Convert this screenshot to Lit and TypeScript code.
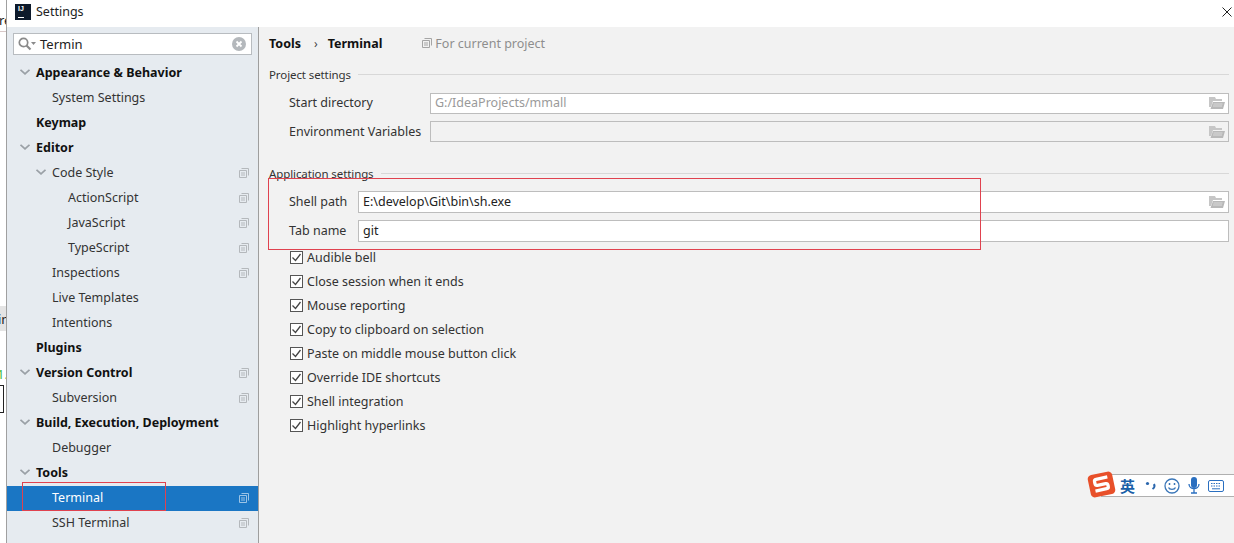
import { LitElement, html, css } from "lit";
import { customElement } from "lit/decorators.js";

type Row = { t: string; lvl: number; bold?: boolean; arrow?: boolean; copy?: boolean; sel?: boolean };
const ROWS: Row[] = [
  { t: "Appearance & Behavior", lvl: 0, bold: true, arrow: true },
  { t: "System Settings", lvl: 1 },
  { t: "Keymap", lvl: 0, bold: true },
  { t: "Editor", lvl: 0, bold: true, arrow: true },
  { t: "Code Style", lvl: 1, arrow: true, copy: true },
  { t: "ActionScript", lvl: 2, copy: true },
  { t: "JavaScript", lvl: 2, copy: true },
  { t: "TypeScript", lvl: 2, copy: true },
  { t: "Inspections", lvl: 1, copy: true },
  { t: "Live Templates", lvl: 1 },
  { t: "Intentions", lvl: 1 },
  { t: "Plugins", lvl: 0, bold: true },
  { t: "Version Control", lvl: 0, bold: true, arrow: true, copy: true },
  { t: "Subversion", lvl: 1, copy: true },
  { t: "Build, Execution, Deployment", lvl: 0, bold: true, arrow: true },
  { t: "Debugger", lvl: 1 },
  { t: "Tools", lvl: 0, bold: true, arrow: true },
  { t: "Terminal", lvl: 1, copy: true, sel: true },
  { t: "SSH Terminal", lvl: 1, copy: true },
];
const CHECKS = ["Audible bell", "Close session when it ends", "Mouse reporting", "Copy to clipboard on selection", "Paste on middle mouse button click", "Override IDE shortcuts", "Shell integration", "Highlight hyperlinks"];

const copyIcon = (c = "#b4b8bc") => html`<svg class="copy" width="10" height="10" viewBox="0 0 10 10" fill="none" stroke=${c}><path d="M2.5 .5h7v7M.5 2.5h7v7h-7z"/><path d="M2 5h4M2 7h4"/></svg>`;
const folder = html`<svg class="folder" width="16" height="13" viewBox="0 0 16 13"><path d="M0 1h6l1 2h6v2H4L2 11H0z" fill="#c6c6c6"/><path d="M4 6h12l-2 7H1.500z" fill="#b8b8b8"/><path d="M4.500 8h9M4 10h9" stroke="#dadada"/></svg>`;

@customElement("app-root")
export class AppRoot extends LitElement {
  static styles = css`
    :host { display: block; width: 1234px; height: 543px; overflow: hidden; position: relative; background: #fff;
      font-family: "Noto Sans", "Open Sans", sans-serif; font-size: 12.5px; color: #1f1f1f; }
    .dialog { position: absolute; left: 6px; top: 0; width: 1228px; height: 543px; display: flex; flex-direction: column;
      border-left: 1px solid #a0a0a0; box-sizing: border-box; background: #fff; }
    .title { height: 27px; box-sizing: border-box; padding: 0 0 4px 8px; flex: none; display: flex; align-items: center; gap: 5px; background: #fff; }
    .logo { width: 16px; height: 16px; background: #0d1a2b; position: relative; flex: none; color: #fff;
      font: bold 7px/9px "Liberation Sans", sans-serif; text-indent: 3px; }
    .logo::after { content: ""; position: absolute; left: 3px; bottom: 2px; width: 6px; height: 1px; background: #fff; }
    .title-text { color: #222; }
    .close { margin-left: auto; margin-right: 2px; display: block; }
    .body { flex: 1; display: flex; min-height: 0; }
    .side { width: 252px; box-sizing: border-box; flex: none; background: #e6ebf0; border-right: 1px solid #9e9e9e; display: flex; flex-direction: column; }
    .search { margin: 6px 6px 0 6px; height: 20px; box-sizing: content-box; flex: none; background: #fff; border: 1px solid #b8bcc0; display: flex; align-items: center; padding-left: 4px; }
    .search .q { flex: none; display: block; }
    .search span { margin-left: 4px; color: #222; font-size: 13px; }
    .search .x { margin-left: auto; margin-right: 5px; display: block; }
    .tree { margin-top: 6px; display: flex; flex-direction: column; }
    .row { height: 25px; box-sizing: border-box; padding-bottom: 2px; flex: none; display: flex; align-items: center; position: relative; color: #333; white-space: nowrap; }
    .row.b { font-weight: 700; color: #111; }
    .row.sel { background: #1a76c4; color: #fff; }
    .l0 { padding-left: 29px; } .l1 { padding-left: 45px; } .l2 { padding-left: 61px; }
    .arrow { position: absolute; top: 8px; display: block; }
    .a0 { left: 13px; } .a1 { left: 29px; }
    .row .copy { position: absolute; left: 232px; top: 7px; }
    .main { flex: 1; background: #f2f2f2; padding: 0 5px 0 10px; min-width: 0; }
    .crumb { height: 32px; display: flex; align-items: center; font-weight: 700; color: #111; }
    .sep { margin: 0 10px 0 13px; font-weight: 400; color: #444; font-size: 12px; }
    .proj { margin-left: 40px; font-weight: 400; color: #8e8e8e; display: flex; align-items: center; gap: 3px; }
    .legend { display: flex; align-items: center; gap: 7px; height: 18px; color: #333; font-size: 11.5px; letter-spacing: -.1px; }
    .legend i { flex: 1; height: 1px; background: #d8d8d8; }
    .field { display: flex; align-items: center; height: 22px; padding-left: 20px; color: #333; }
    .field.short, .field.short .input { height: 21px; }
    .field label { flex: none; }
    .field.lift label { padding-bottom: 2px; }
    .input { flex: 1; height: 22px; box-sizing: border-box; border: 1px solid #bdbdbd; background: #fff; display: flex; align-items: center; padding: 0 3px 0 4px; color: #222; white-space: nowrap; }
    .field.lift .input { padding-bottom: 2px; }
    .input.dis { color: #9a9a9a; }
    .input.empty { background: #f2f2f2; }
    .input .folder { margin-left: auto; display: block; }
    .w1 label { width: 141px; } .w2 label { width: 69px; }
    .checks { padding-left: 21px; margin-top: 3px; display: flex; flex-direction: column; }
    .chk { height: 24px; display: flex; align-items: center; gap: 4px; color: #333; }
    .chk svg { display: block; flex: none; }
    .redbox { position: absolute; border: 1px solid #e0424f; box-sizing: border-box; pointer-events: none; }
    .r1 { left: 22px; top: 482px; width: 144px; height: 29px; }
    .r2 { left: 268px; top: 178px; width: 713px; height: 72px; }
    .ime { position: absolute; left: 1087px; top: 470px; width: 147px; height: 30px; }
    .ime-bar { position: absolute; left: 14px; top: 4px; right: 0; height: 23px; border: 1px solid #b0b0b0; border-right: 0; box-sizing: border-box; background: #fff; }
    .ime-s { position: absolute; left: 0; top: 0; display: block; }
    .ime-t { position: absolute; left: 33px; top: 6px; color: #1a5fa8; font: 700 15px/20px "Noto Sans CJK SC", sans-serif; }
    .ime-i { position: absolute; display: block; }
    .i1 { left: 58px; top: 11px; } .i2 { left: 77px; top: 8px; } .i3 { left: 101px; top: 7px; } .i4 { left: 121px; top: 10px; }
    .bg-t { position: absolute; left: 0; font-size: 13px; white-space: nowrap; color: #222; }
    .t1 { top: 11px; left: -1px; } .t2 { top: 310px; left: -2px; } .t3 { top: 365px; left: -3px; color: #3cba3c; }
    .bg-line { position: absolute; left: 0; top: 31px; width: 6px; height: 1px; background: #d8c8c8; }
    .bg-grey { position: absolute; left: 0; top: 306px; height: 25px; width: 6px; background: #e4e4e4; }
    .bg-box { position: absolute; left: 0; top: 385px; width: 3px; height: 26px; border: 1px solid #222; border-left: 0; box-sizing: content-box; }
    .m6 { margin-top: 6px; } .m10 { margin-top: 10px; } .m7 { margin-top: 7px; } .m22 { margin-top: 22px; } .m9 { margin-top: 9px; }
  `;

  render() {
    return html`
      <div class="bg-line"></div>
      <div class="bg-grey"></div>
      <div class="bg-t t1">re</div>
      <div class="bg-t t2">in</div>
      <div class="bg-t t3">1.</div>
      <div class="bg-box"></div>
      <div class="dialog">
        <div class="title">
          <div class="logo">IJ</div>
          <span class="title-text">Settings</span>
          <svg class="close" width="10" height="10" viewBox="0 0 10 10" stroke="#222" fill="none"><path d="M.5.5l9 9M9.500.5l-9 9"/></svg>
        </div>
        <div class="body">
          <div class="side">
            <div class="search">
              <svg class="q" width="18" height="15" viewBox="0 0 18 15" fill="none"><circle cx="5.500" cy="5.500" r="4.200" stroke="#8a8a8a" stroke-width="1.700"/><path d="M8.500 8.500l4 4" stroke="#8a8a8a" stroke-width="2.200"/><path d="M13 5h5l-2.500 3z" fill="#8a8a8a"/></svg>
              <span>Termin</span>
              <svg class="x" width="14" height="14" viewBox="0 0 14 14"><circle cx="7" cy="7" r="7" fill="#b4b8bc"/><path d="M4.500 4.500l5 5M9.500 4.500l-5 5" stroke="#fff" stroke-width="1.800"/></svg>
            </div>
            <div class="tree">
              ${ROWS.map((r) => html`
                <div class="row l${r.lvl} ${r.bold ? "b" : ""} ${r.sel ? "sel" : ""}">
                  ${r.arrow ? html`<svg class="arrow a${r.lvl}" width="10" height="6" viewBox="0 0 10 6" fill="none" stroke="#9aa0a6" stroke-width="1.800"><path d="M.5.800l4.500 4 4.500-4"/></svg>` : ""}
                  ${r.t}
                  ${r.copy ? copyIcon(r.sel ? "#9cc4e6" : "#b4b8bc") : ""}
                </div>`)}
            </div>
          </div>
          <div class="main">
            <div class="crumb">Tools<span class="sep">›</span>Terminal
              <span class="proj">${copyIcon("#a5a5a5")}For current project</span></div>
            <div class="legend m6">Project settings<i></i></div>
            <div class="field w1 short lift m10"><label>Start directory</label><div class="input dis">G:/IdeaProjects/mmall${folder}</div></div>
            <div class="field w1 short m7"><label>Environment Variables</label><div class="input empty">${folder}</div></div>
            <div class="legend m22">Application settings<i></i></div>
            <div class="field w2 lift m9"><label>Shell path</label><div class="input">E:\\develop\\Git\\bin\\sh.exe${folder}</div></div>
            <div class="field w2 lift m7"><label>Tab name</label><div class="input">git</div></div>
            <div class="checks">
              ${CHECKS.map((c) => html`<div class="chk"><svg width="13" height="13" viewBox="0 0 13 13" fill="#fff"><rect x=".5" y=".5" width="12" height="12" fill="#fff" stroke="#555"/><path d="M2.500 6.500l3 3 5-6.500" fill="none" stroke="#444" stroke-width="1.300"/></svg>${c}</div>`)}
            </div>
          </div>
        </div>
      </div>
      <div class="redbox r1"></div>
      <div class="redbox r2"></div>
      <div class="ime">
        <div class="ime-bar"></div>
        <svg class="ime-s" width="29" height="29" viewBox="0 0 28 28"><g transform="rotate(-12 14 14)"><rect x="2" y="3" width="24" height="22" rx="4" fill="#e8502a"/><path d="M21 8H10a2 2 0 0 0-2 2v2a2 2 0 0 0 2 2h8a2 2 0 0 1 2 2v1a2 2 0 0 1-2 2H7" fill="none" stroke="#fff" stroke-width="3.200"/></g></svg>
        <span class="ime-t">英</span>
        <svg class="ime-i i1" width="12" height="12" viewBox="0 0 12 12"><circle cx="2.500" cy="2.500" r="1.600" fill="#2a66ad"/><path d="M9 3c1 2 0 4-1.500 5" stroke="#2a66ad" stroke-width="2" fill="none"/></svg>
        <svg class="ime-i i2" width="16" height="16" viewBox="0 0 16 16" fill="none" stroke="#3a76b8" stroke-width="1.300"><circle cx="8" cy="8" r="7"/><path d="M4.500 9.500c1 2.500 6 2.500 7 0"/><path d="M5.500 5v2M10.500 5v2" stroke-width="1.500"/></svg>
        <svg class="ime-i i3" width="12" height="17" viewBox="0 0 12 17" fill="none"><rect x="3" y="0" width="6" height="11" rx="3" fill="#2a6fc0"/><path d="M1 7c0 6 10 6 10 0M6 12v4M3 16h6" stroke="#2a6fc0" stroke-width="1.300"/></svg>
        <svg class="ime-i i4" width="16" height="12" viewBox="0 0 16 12" fill="none"><rect x=".5" y=".5" width="15" height="11" rx="1.500" stroke="#2a6fc0"/><path d="M3 3.500h10M3 6h10" stroke="#2a6fc0" stroke-dasharray="1.500 1"/><path d="M4 8.800h8" stroke="#2a6fc0"/></svg>
      </div>
    `;
  }
}
